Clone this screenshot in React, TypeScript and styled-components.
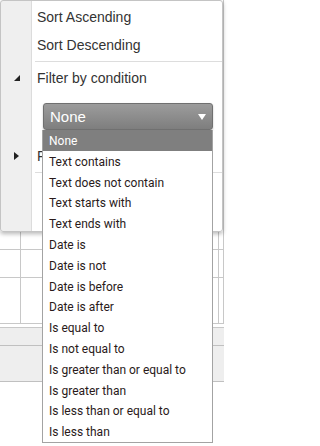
import styled, { createGlobalStyle } from "styled-components";

const GlobalStyle = createGlobalStyle`
    html, body {
        margin: 0;
        padding: 0;
        background: #ffffff;
        overflow: hidden;
    }
    * {
        box-sizing: border-box;
    }
`

const Page = styled.div`
    position: relative;
    width: 224px;
    height: 446px;
    font-family: "Liberation Sans", Arial, sans-serif;
`

const Sheet = styled.div`
    display: flex;
    flex-direction: column;
`

const SheetRow = styled.div<{ $h: number }>`
    display: flex;
    height: ${p => p.$h}px;
    border-bottom: 1px solid #c8c8c8;
`

const SheetCell = styled.div<{ $w: number }>`
    width: ${p => p.$w}px;
    border-right: 1px solid #c8c8c8;
`

const Footer = styled.div`
    margin-top: 3px;
    border-top: 1px solid #c8c8c8;
    display: flex;
    flex-direction: column;
`

const FooterBand = styled.div<{ $h: number }>`
    height: ${p => p.$h}px;
    background: #eeeeee;
    border-bottom: 1px solid #c0c0c0;
`

const Panel = styled.div`
    position: absolute;
    top: 0;
    left: 0;
    width: 223px;
    height: 232px;
    padding-top: 2px;
    border: 1px solid #c4c4c4;
    border-radius: 3px;
    background: linear-gradient(to right, #efefef 0, #efefef 30px, #dcdcdc 30px, #dcdcdc 31px, #ffffff 31px);
    box-shadow: 0 2px 4px rgba(0, 0, 0, 0.28);
    display: flex;
    flex-direction: column;
`

const MenuItem = styled.div`
    display: flex;
    align-items: center;
    height: 28px;
    font-size: 14px;
    color: #333333;
`

const IconSlot = styled.div`
    width: 31px;
    display: flex;
    justify-content: center;
    align-items: center;
`

const Label = styled.span`
    padding-left: 5px;
    white-space: nowrap;
`

const Separator = styled.div`
    height: 1px;
    margin: 2px 0 2px 34px;
    background: #dddddd;
`

const SelectArea = styled.div`
    padding: 11px 0 12px 42px;
`

const Select = styled.div`
    width: 170px;
    height: 27px;
    display: flex;
    align-items: center;
    justify-content: space-between;
    padding: 0 6px 0 6px;
    border: 1px solid #707070;
    border-radius: 3px;
    background: linear-gradient(to bottom, #9c9c9c, #7e7e7e);
    box-shadow: 0 1px 2px rgba(0, 0, 0, 0.25);
    color: #ffffff;
    font-size: 15px;
`

const OptionList = styled.div`
    position: absolute;
    top: 130px;
    left: 42px;
    width: 171px;
    background: #ffffff;
    border: 1px solid #a3a3a3;
    border-top: none;
    font-family: Roboto, "Liberation Sans", sans-serif;
    font-size: 12px;
`

const Option = styled.div<{ $active?: boolean }>`
    height: 20.8px;
    line-height: 18.8px;
    padding: 2px 0 0 6px;
    white-space: nowrap;
    background: ${p => (p.$active ? "#7f7f7f" : "#ffffff")};
    color: ${p => (p.$active ? "#ffffff" : "#2a1a1a")};
`

const options = [
    "None",
    "Text contains",
    "Text does not contain",
    "Text starts with",
    "Text ends with",
    "Date is",
    "Date is not",
    "Date is before",
    "Date is after",
    "Is equal to",
    "Is not equal to",
    "Is greater than or equal to",
    "Is greater than",
    "Is less than or equal to",
    "Is less than",
];

function Expanded() {
    return (
        <svg width="6" height="6" viewBox="0 0 6 6">
            <polygon points="6,0 6,6 0,6" fill="#222" />
        </svg>
    )
}

function Collapsed() {
    return (
        <svg width="5" height="8" viewBox="0 0 5 8">
            <polygon points="0,0 5,4 0,8" fill="#222" />
        </svg>
    )
}

function Arrow() {
    return (
        <svg width="8" height="6" viewBox="0 0 8 6">
            <polygon points="0,0 8,0 4,6" fill="#ffffff" />
        </svg>
    )
}

export default function App() {
    const widths = [21, 198, 5];
    return (
        <Page>
            <GlobalStyle />
            <Sheet>
                {[250, 28, 46].map(h => (
                    <SheetRow key={h} $h={h}>
                        {widths.map((w, i) => <SheetCell key={i} $w={w} />)}
                    </SheetRow>
                ))}
            </Sheet>
            <Footer>
                <FooterBand $h={18} />
                <FooterBand $h={36} />
            </Footer>

            <Panel>
                <MenuItem>
                    <IconSlot />
                    <Label>Sort Ascending</Label>
                </MenuItem>
                <MenuItem>
                    <IconSlot />
                    <Label>Sort Descending</Label>
                </MenuItem>
                <Separator />
                <MenuItem>
                    <IconSlot><Expanded /></IconSlot>
                    <Label>Filter by condition</Label>
                </MenuItem>
                <SelectArea>
                    <Select>
                        <span>None</span>
                        <Arrow />
                    </Select>
                </SelectArea>
                <MenuItem>
                    <IconSlot><Collapsed /></IconSlot>
                    <Label>Filter by value</Label>
                </MenuItem>
                <Separator />
            </Panel>

            <OptionList>
                {options.map((o, i) => (
                    <Option key={o} $active={i === 0}>{o}</Option>
                ))}
            </OptionList>
        </Page>
    )
}
